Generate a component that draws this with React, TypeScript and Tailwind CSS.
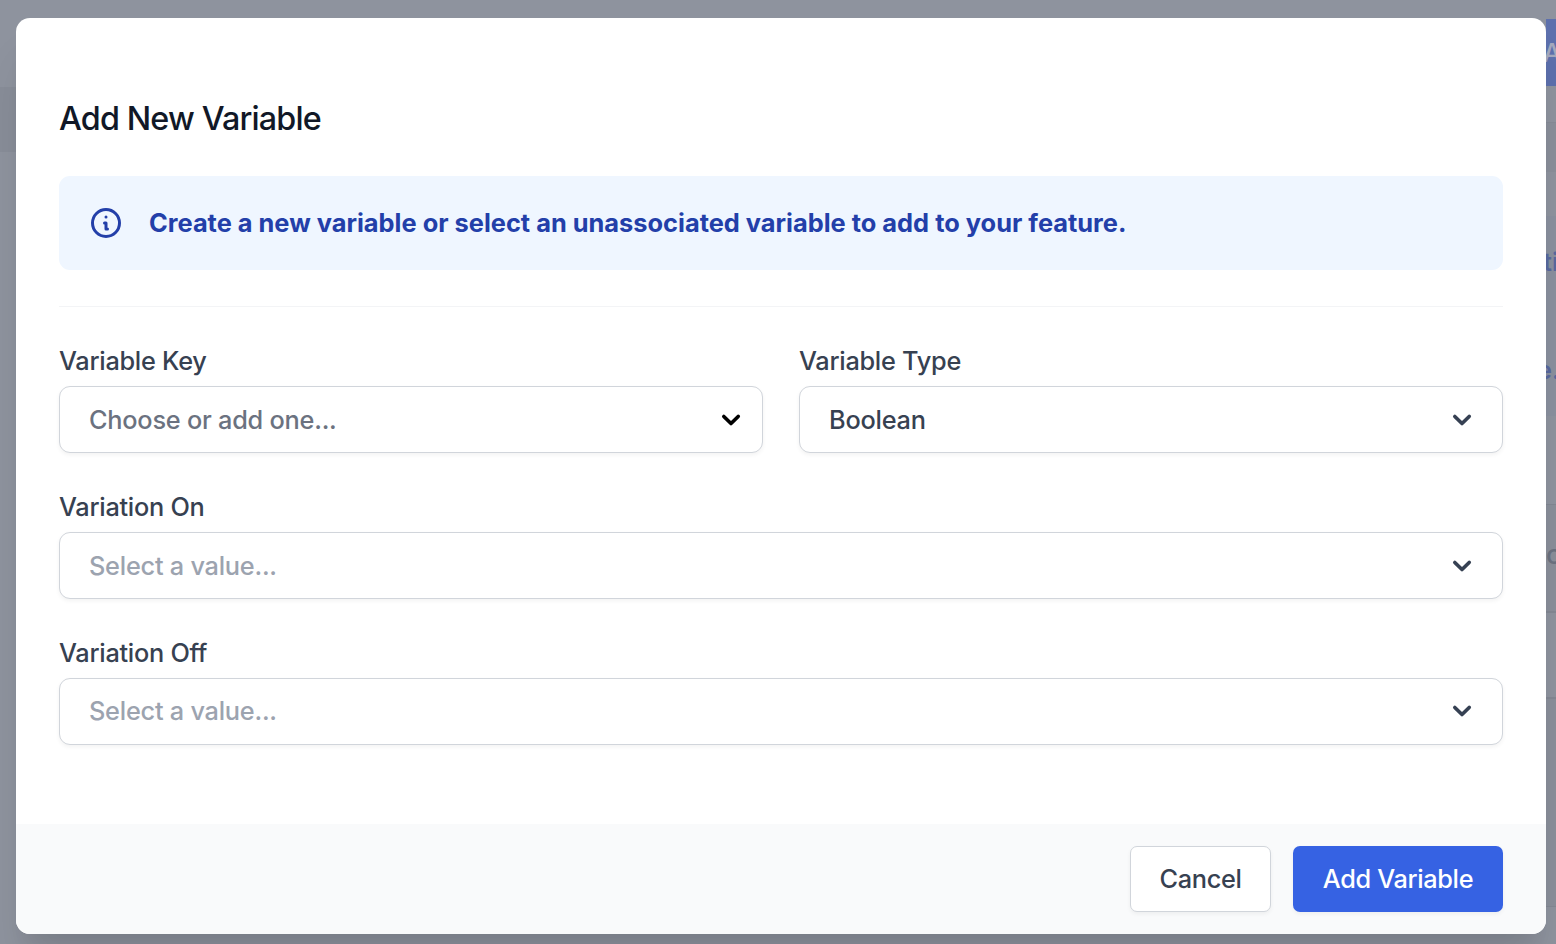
import React from "react";

function Chevron({ className }: { className: string }) {
  return (
    <svg viewBox="0 0 20 20" fill="currentColor" className={`size-[36px] shrink-0 ${className}`}>
      <path
        fillRule="evenodd"
        clipRule="evenodd"
        d="M5.293 7.293a1 1 0 011.414 0L10 10.586l3.293-3.293a1 1 0 111.414 1.414l-4 4a1 1 0 01-1.414 0l-4-4a1 1 0 010-1.414z"
      />
    </svg>
  );
}

function Field({
  label,
  value,
  tone,
  padding = "pl-[29px] pr-[22px]",
  chevron = "text-gray-700",
}: {
  label: string;
  value: string;
  tone: string;
  padding?: string;
  chevron?: string;
}) {
  return (
    <div className="flex min-w-0 flex-1 flex-col">
      <span className="flex h-[35px] items-center text-[25.3px] font-medium tracking-[-0.26px] text-[#374151]">{label}</span>
      <button
        className={`mt-2 flex h-[67px] items-center justify-between rounded-[11px] border border-[#d1d5db] bg-white shadow-[0_2px_4px_0_rgba(0,0,0,0.05)] ${padding}`}
      >
        <span className={`text-[25.3px] font-medium tracking-[-0.23px] ${tone}`}>{value}</span>
        <Chevron className={chevron} />
      </button>
    </div>
  );
}

function Background() {
  return (
    <div className="flex h-full justify-between overflow-hidden bg-[#8e939e]">
      <div className="flex w-4 flex-col">
        <div className="h-[87px]" />
        <div className="h-[65px] bg-[#888d98]" />
      </div>
      <div className="flex w-[10px] flex-col overflow-hidden text-[25.3px] font-medium leading-[36px]">
        <div className="h-[19px]" />
        <div className="flex h-[67px] items-center bg-[#5d70ad] text-[#a4a9bd]">
          <span className="-ml-[3px]">A</span>
        </div>
        <div className="h-[37px] border-b border-[#868b96]" />
        <div className="h-[49px] bg-[#8a8f9a]" />
        <div className="h-[44px]" />
        <div className="flex h-[200px] flex-col bg-[#8a909e] font-semibold text-[#58699f]">
          <span className="-ml-[3px] mt-[28px]">ti</span>
          <span className="-ml-[9px] mt-[72px]">e.</span>
        </div>
        <div className="h-[89px] border-b border-[#828792]" />
        <div className="h-[108px] border-b-2 border-[#838893] bg-[#8a8f9a] pt-[32px] text-[27px] text-[#6b7280]">o</div>
        <div className="h-[86px] border-b-2 border-[#838893]" />
        <div className="h-[208px] border-b border-[#838893] bg-[#8a8f9a]" />
      </div>
    </div>
  );
}

export default function App() {
  return (
    <div className="relative h-[944px] w-[1556px] overflow-hidden font-['Inter',sans-serif]">
      <Background />
      <div className="absolute inset-0 pb-[10px] pl-4 pr-[10px] pt-[18px]">
        <div className="flex h-full flex-col overflow-hidden rounded-[14px] bg-white shadow-[0_36px_46px_-9px_rgba(0,0,0,0.1),0_18px_18px_-9px_rgba(0,0,0,0.06)]">
          <div className="flex flex-1 flex-col px-[43px] pt-[78px]">
            <h2 className="flex h-[46px] items-center text-[32.3px] font-medium tracking-[-0.85px] text-[#111827]">
              Add New Variable
            </h2>
            <div className="mt-[34px] flex h-[94px] items-center rounded-[11px] bg-[#eff6ff] pl-[29px] text-[#233fa9]">
              <svg viewBox="0 0 24 24" fill="none" stroke="currentColor" strokeWidth="2" strokeLinecap="round" strokeLinejoin="round" className="size-[36px]">
                <path d="M13 16h-1v-4h-1m1-4h.01M21 12a9 9 0 11-18 0 9 9 0 0118 0z" />
              </svg>
              <span className="ml-[25px] pt-px text-[25.4px] font-bold">
                Create a new variable or select an unassociated variable to add to your feature.
              </span>
            </div>
            <div className="mt-9 border-t border-[#f3f4f6]" />
            <div className="mt-9 flex flex-col gap-9">
              <div className="flex gap-9">
                <Field
                  label="Variable Key"
                  value="Choose or add one..."
                  tone="text-[#6b7280]"
                  padding="pl-[29px] pr-[13px]"
                  chevron="text-black"
                />
                <Field label="Variable Type" value="Boolean" tone="text-[#374151]" />
              </div>
              <Field label="Variation On" value="Select a value..." tone="text-[#9ca3af]" />
              <Field
                label="Variation Off"
                value="Select a value..."
                tone="text-[#9ca3af]"
                padding="pl-[29px] pr-[22px] pb-[2px]"
              />
            </div>
          </div>
          <div className="flex h-[110px] shrink-0 items-center justify-end gap-[22px] bg-[#f9fafb] pr-[43px] text-[25.3px] font-medium tracking-[-0.34px]">
            <button className="h-[66px] w-[141px] rounded-[7px] border border-[#d1d5db] bg-white pb-px text-[#374151] shadow-[0_2px_4px_0_rgba(0,0,0,0.05)]">
              Cancel
            </button>
            <button className="h-[66px] w-[210px] rounded-[7px] bg-[#3662e3] pb-px text-white shadow-[0_2px_4px_0_rgba(0,0,0,0.05)]">
              Add Variable
            </button>
          </div>
        </div>
      </div>
    </div>
  );
}
